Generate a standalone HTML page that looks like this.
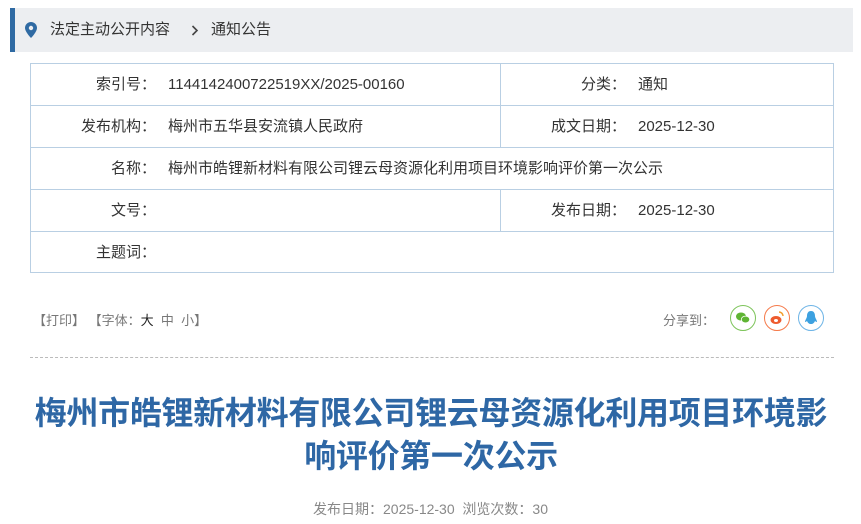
<!DOCTYPE html>
<html><head><meta charset="utf-8"><style>
body{margin:0;width:861px;height:524px;overflow:hidden;background:#fff;font-family:"Liberation Sans","Noto Sans CJK SC",sans-serif;color:#333;position:relative}
.bc{position:absolute;left:10px;top:8px;width:843px;height:44px;background:#eceef1;border-left:5px solid #2f6aa3;box-sizing:border-box;font-size:15px;line-height:44px;color:#333}
.bc .pin{position:absolute;left:10px;top:14px}
.bc .t1{position:absolute;left:35px}
.bc .arr{position:absolute;left:176px;top:17px}
.bc .t2{position:absolute;left:196px}
.tb{position:absolute;left:30px;top:63px;width:804px;height:210px;border:1px solid #b9cfe3;box-sizing:border-box}
.row{position:absolute;left:0;width:802px;height:42px;border-top:1px solid #b9cfe3;font-size:15px;line-height:42px}
.row span{position:absolute;top:0;white-space:nowrap}
.vd{position:absolute;left:469px;top:0;height:42px;border-left:1px solid #b9cfe3}
.la{right:677px}
.va{left:137px}
.lb{right:207px}
.vb{left:607px}
.ops{position:absolute;left:33px;top:310px;font-size:13px;color:#777}
.ops b{font-weight:normal;color:#222}
.share{position:absolute;left:663px;top:310px;font-size:13px;color:#777}
.ic{position:absolute;top:305px;width:26px;height:26px;border-radius:50%;box-sizing:border-box;border:1px solid;display:flex;align-items:center;justify-content:center}
.hr{position:absolute;left:30px;top:357px;width:804px;border-top:1px dashed #bbb}
h1{position:absolute;left:30px;top:392px;width:802px;margin:0;text-align:center;font-size:32px;line-height:43px;color:#2e67a5;font-weight:bold;letter-spacing:-0.3px}
.meta{position:absolute;left:0;width:861px;top:499px;text-align:center;font-size:14px;color:#888}
</style></head><body>
<div class="bc">
<svg class="pin" width="12" height="16" viewBox="0 0 12 16"><path d="M6 0C2.7 0 0 2.6 0 5.9 0 10 6 16 6 16s6-6 6-10.1C12 2.6 9.3 0 6 0z" fill="#2f6aa3"/><circle cx="6" cy="6" r="2.2" fill="#eceef1"/></svg>
<span class="t1">法定主动公开内容</span>
<svg class="arr" width="8" height="11" viewBox="0 0 8 11"><path d="M1.5 1l4.5 4.5-4.5 4.5" stroke="#444" stroke-width="1.6" fill="none"/></svg>
<span class="t2">通知公告</span>
</div>
<div class="tb">
<div class="row" style="top:0;border-top:none"><span class="la">索引号：</span><span class="va">1144142400722519XX/2025-00160</span><div class="vd"></div><span class="lb">分类：</span><span class="vb">通知</span></div>
<div class="row" style="top:41px"><span class="la">发布机构：</span><span class="va">梅州市五华县安流镇人民政府</span><div class="vd"></div><span class="lb">成文日期：</span><span class="vb">2025-12-30</span></div>
<div class="row" style="top:83px"><span class="la">名称：</span><span class="va">梅州市皓锂新材料有限公司锂云母资源化利用项目环境影响评价第一次公示</span></div>
<div class="row" style="top:125px"><span class="la">文号：</span><div class="vd"></div><span class="lb">发布日期：</span><span class="vb">2025-12-30</span></div>
<div class="row" style="top:167px"><span class="la">主题词：</span></div>
</div>
<div class="ops">【打印】 【字体：<b>大</b>&nbsp; 中&nbsp; 小】</div>
<div class="share">分享到：</div>
<div class="ic" style="left:730px;border-color:#7dc45a"><svg width="18" height="18" viewBox="0 0 18 18"><ellipse cx="7" cy="7.5" rx="5" ry="4" fill="#5fb433"/><ellipse cx="11.5" cy="10.5" rx="4.2" ry="3.4" fill="#5fb433" stroke="#fff" stroke-width=".8"/></svg></div>
<div class="ic" style="left:764px;border-color:#f57a4a"><svg width="18" height="18" viewBox="0 0 18 18"><ellipse cx="8" cy="11" rx="5.5" ry="4" fill="#ee5b2e"/><ellipse cx="8" cy="11.5" rx="2" ry="1.5" fill="#fff"/><path d="M11 3a4 4 0 0 1 4 4" stroke="#f39c2a" stroke-width="1.5" fill="none"/></svg></div>
<div class="ic" style="left:798px;border-color:#6db4e6"><svg width="18" height="18" viewBox="0 0 18 18"><path d="M9 2c-3 0-4 2.5-4 5 0 2-2 4-2 6 1 0 2-1 2-1 1 2 2 3 4 3s3-1 4-3c0 0 1 1 2 1 0-2-2-4-2-6 0-2.5-1-5-4-5z" fill="#3da1e0"/></svg></div>
<div class="hr"></div>
<h1>梅州市皓锂新材料有限公司锂云母资源化利用项目环境影响评价第一次公示</h1>
<div class="meta">发布日期：2025-12-30&nbsp; 浏览次数：30</div>
</body></html>
